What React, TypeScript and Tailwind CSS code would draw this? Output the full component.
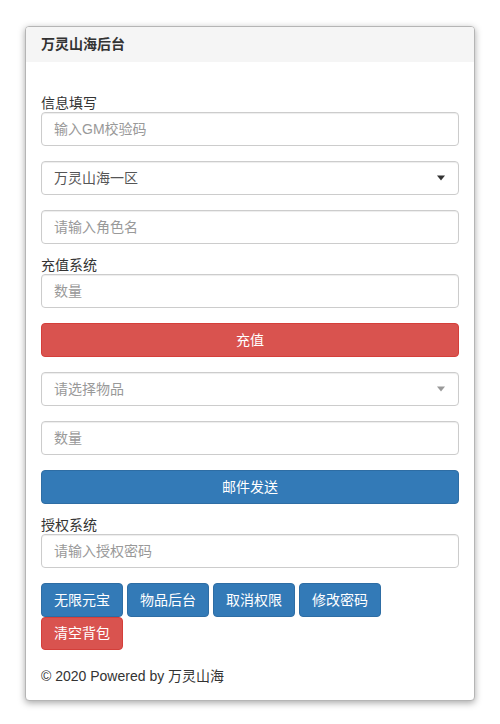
import { useState } from 'react';

const font = 'font-["Helvetica_Neue","Liberation_Sans","Noto_Sans_CJK_SC",sans-serif]';

const inputCls =
    'block w-full h-[34px] px-3 text-[14px] text-[#555] placeholder:text-[#999] bg-white border border-[#ccc] rounded-[4px] shadow-[inset_0_1px_1px_rgba(0,0,0,0.075)] outline-none';

const Caret = ({ color }: { color: string }) => (
    <span
        className={`absolute right-[14px] top-1/2 -translate-y-1/2 w-0 h-0 border-x-[4px] border-x-transparent border-t-[5px] ${color}`}
    />
);

const App = () => {
    const [area] = useState('万灵山海一区');

    const authButtons = ['无限元宝', '物品后台', '取消权限', '修改密码'];

    return (
        <div className={`min-h-[724px] bg-white pt-[26px] ${font}`}>
            <div className="mx-auto w-[450px] bg-white border border-[#b5b5b5] rounded-[4px] shadow-[0_2px_7px_rgba(0,0,0,0.35)] overflow-hidden">
                {/* Heading */}
                <div className="h-[35px] px-[15px] flex items-center bg-[#f5f5f5] text-[14px] font-bold text-[#333]">
                    万灵山海后台
                </div>

                {/* Body */}
                <div className="px-[15px] pt-[33px] pb-[14px] text-[14px] text-[#333]">
                    <label className="block leading-[17px]">信息填写</label>
                    <input className={inputCls} placeholder="输入GM校验码" />

                    <div className="relative mt-[15px]">
                        <div className={`${inputCls} flex items-center text-[#333]`}>{area}</div>
                        <Caret color="border-t-[#333]" />
                    </div>

                    <input className={`${inputCls} mt-[15px]`} placeholder="请输入角色名" />

                    <label className="block leading-[17px] mt-[13px]">充值系统</label>
                    <input className={inputCls} placeholder="数量" />

                    <button className="mt-[15px] w-full h-[34px] rounded-[4px] bg-[#d9534f] border border-[#d43f3a] text-white text-[14px]">
                        充值
                    </button>

                    <div className="relative mt-[15px]">
                        <div className={`${inputCls} flex items-center text-[#999]`}>请选择物品</div>
                        <Caret color="border-t-[#999]" />
                    </div>

                    <input className={`${inputCls} mt-[15px]`} placeholder="数量" />

                    <button className="mt-[15px] w-full h-[34px] rounded-[4px] bg-[#337ab7] border border-[#2e6da4] text-white text-[14px]">
                        邮件发送
                    </button>

                    <label className="block leading-[17px] mt-[13px]">授权系统</label>
                    <input className={inputCls} placeholder="请输入授权密码" />

                    <div className="mt-[15px] flex flex-wrap gap-x-[4px] w-[340px]">
                        {authButtons.map((b) => (
                            <button
                                key={b}
                                className="h-[34px] px-3 rounded-[4px] bg-[#337ab7] border border-[#2e6da4] text-white text-[14px]"
                            >
                                {b}
                            </button>
                        ))}
                        <button className="h-[33px] px-3 rounded-[4px] bg-[#d9534f] border border-[#d43f3a] text-white text-[14px]">
                            清空背包
                        </button>
                    </div>

                    <p className="mt-[16px] leading-[20px]">© 2020 Powered by 万灵山海</p>
                </div>
            </div>
        </div>
    );
};

export default App;
